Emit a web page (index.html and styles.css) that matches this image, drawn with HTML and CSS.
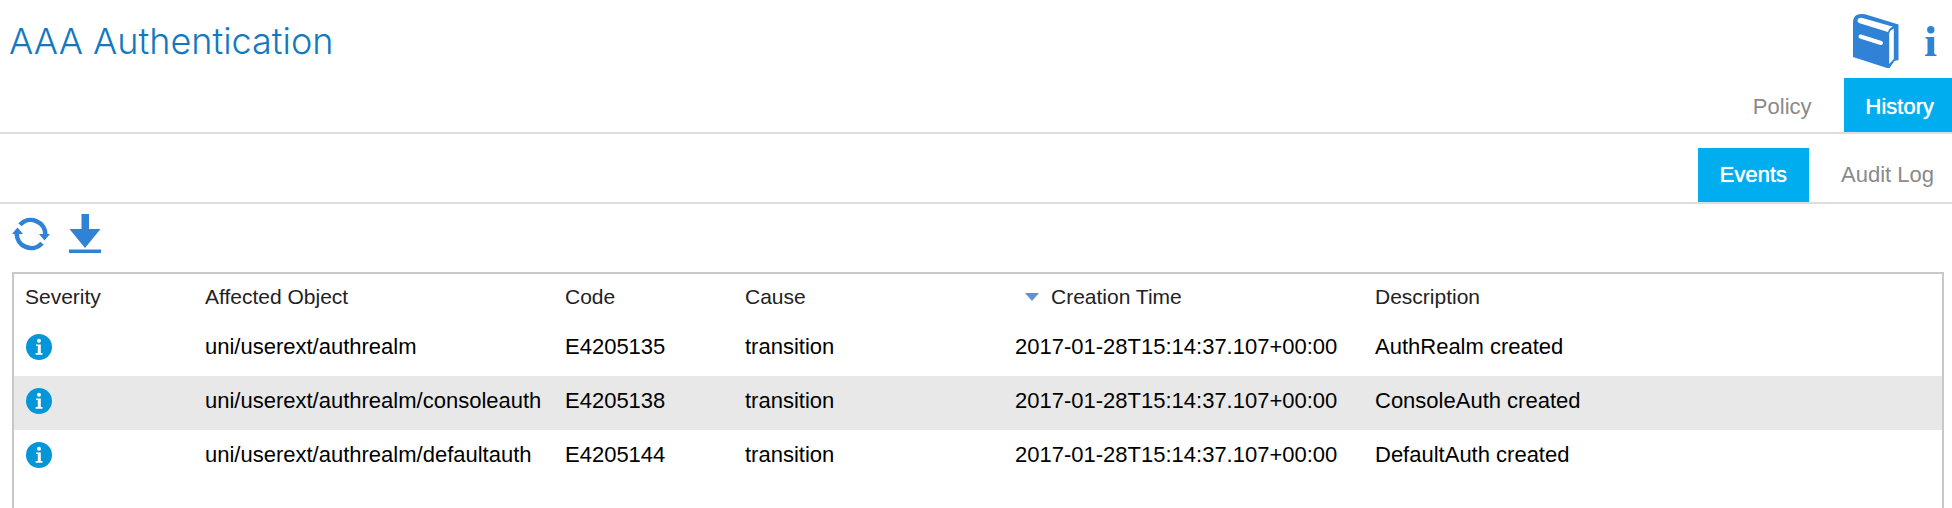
FILE: index.html
```html
<!DOCTYPE html>
<html lang="en">
<head>
<meta charset="utf-8">
<title>AAA Authentication</title>
<link rel="stylesheet" href="styles.css">
</head>
<body>
<svg class="defs" aria-hidden="true">
  <symbol id="severity-info" viewBox="0 0 26 26">
    <circle cx="13" cy="13" r="13" fill="#0496d9"/>
    <circle cx="13" cy="6.8" r="2" fill="#fff"/>
    <path d="M10 10.400h4.800v8.600h1.700v1.700H9.600V19h2.200v-6.900H10z" fill="#fff"/>
  </symbol>
</svg>
<header class="header">
  <h1 class="title">AAA Authentication</h1>
  <div class="header-actions">
    <button class="icon-button" type="button" aria-label="Documentation">
      <svg width="46" height="54" viewBox="0 0 46 54">
        <path d="M0 7Q1 0 8 0L12 .3 45.500 10.500V46l-4 1-5 7H34L0 43z" fill="#2f82d6"/>
        <path d="M4.500 6.500Q5 3 9.500 4L40 12.800Q36 14 35 18L7.500 9.500Q4.300 8.500 4.500 6.500z" fill="#fff"/>
        <path d="M36.200 19.500q1-3.500 4.600-5v30.500l-4.600 5z" fill="#fff"/>
        <path d="M7.500 22.500l20.500 6.500" stroke="#fff" stroke-width="4" stroke-linecap="round"/>
      </svg>
    </button>
    <button class="icon-button" type="button" aria-label="Information">
      <svg width="12" height="30" viewBox="0 0 12 30">
        <circle cx="5.800" cy="3.700" r="3.700" fill="#2f82d6"/>
        <path d="M.5 11h8.700v16q0 1.500 2.300 1.800V30H0v-1.200q2.500-.3 2.500-1.800V13.500q0-1-2-1.200z" fill="#2f82d6"/>
      </svg>
    </button>
  </div>
</header>
<nav class="tabs main-tabs" aria-label="Sections">
  <a class="tab" href="#policy">Policy</a>
  <a class="tab tab-active" href="#history">History</a>
</nav>
<nav class="tabs subtabs" aria-label="History views">
  <a class="tab tab-active" href="#events">Events</a>
  <a class="tab" href="#audit-log">Audit Log</a>
</nav>
<div class="toolbar">
  <button class="icon-button" type="button" aria-label="Refresh">
    <svg width="38" height="34" viewBox="0 0 38 34">
      <g fill="none" stroke="#2f82d6" stroke-width="4.600">
        <path d="M8 7.800A14.500 14.500 0 0 1 33.300 18"/>
        <path d="M30 26.200A14.500 14.500 0 0 1 4.700 16"/>
      </g>
      <path d="M27 17h11l-5.500 6.500zM0 17h11L5.500 10.500z" fill="#2f82d6"/>
    </svg>
  </button>
  <button class="icon-button" type="button" aria-label="Download">
    <svg width="32" height="40" viewBox="0 0 32 40">
      <path d="M12.500 0h7.500v15h11.500L16 34 .5 15h12zM0 35.500h32V39H0z" fill="#2f82d6"/>
    </svg>
  </button>
</div>
<main class="panel">
  <table class="events">
    <colgroup>
      <col class="col-narrow"><col class="col-wide"><col class="col-narrow"><col class="col-medium"><col class="col-wide"><col>
    </colgroup>
    <thead>
      <tr>
        <th scope="col">Severity</th>
        <th scope="col">Affected Object</th>
        <th scope="col">Code</th>
        <th scope="col">Cause</th>
        <th scope="col" aria-sort="descending"><span class="sorted"><svg width="14" height="8" viewBox="0 0 14 8"><path d="M0 0h14L7 8z" fill="#5b94d6"/></svg>Creation Time</span></th>
        <th scope="col">Description</th>
      </tr>
    </thead>
    <tbody>
      <tr>
        <td><svg class="severity" role="img" aria-label="Info"><use href="#severity-info"/></svg></td>
        <td>uni/userext/authrealm</td>
        <td>E4205135</td>
        <td>transition</td>
        <td>2017-01-28T15:14:37.107+00:00</td>
        <td>AuthRealm created</td>
      </tr>
      <tr>
        <td><svg class="severity" role="img" aria-label="Info"><use href="#severity-info"/></svg></td>
        <td>uni/userext/authrealm/consoleauth</td>
        <td>E4205138</td>
        <td>transition</td>
        <td>2017-01-28T15:14:37.107+00:00</td>
        <td>ConsoleAuth created</td>
      </tr>
      <tr>
        <td><svg class="severity" role="img" aria-label="Info"><use href="#severity-info"/></svg></td>
        <td>uni/userext/authrealm/defaultauth</td>
        <td>E4205144</td>
        <td>transition</td>
        <td>2017-01-28T15:14:37.107+00:00</td>
        <td>DefaultAuth created</td>
      </tr>
    </tbody>
  </table>
</main>
</body>
</html>
```
FILE: styles.css
```css
* {
  box-sizing: border-box;
}

body {
  display: flex;
  flex-direction: column;
  min-height: 100vh;
  margin: 0;
  background: #fff;
  color: #000;
  font-family: "Liberation Sans", Arial, sans-serif;
  font-size: 22px;
}

svg {
  display: block;
}

.defs {
  position: absolute;
  width: 0;
  height: 0;
}

.header {
  display: flex;
  justify-content: space-between;
  align-items: flex-start;
  height: 78px;
  padding: 14px 15px 0 9px;
}

.title {
  margin: 0;
  color: #1279c0;
  font-family: Inter, "Liberation Sans", sans-serif;
  font-size: 36px;
  font-weight: 300;
  line-height: 54px;
}

.header-actions {
  display: flex;
  align-items: center;
  gap: 26px;
}

.icon-button {
  padding: 0;
  border: 0;
  background: none;
  cursor: pointer;
}

.tabs {
  display: flex;
  justify-content: flex-end;
  gap: 10px;
  border-bottom: 2px solid #ddd;
}

.subtabs {
  padding-top: 14px;
}

.tab {
  padding: 0 22px;
  color: #8a8a8a;
  line-height: 54px;
  text-decoration: none;
}

.tab:last-child {
  padding-right: 18px;
}

.main-tabs .tab {
  padding-top: 4px;
  line-height: 50px;
}

.tab-active {
  background: #00adef;
  color: #fff;
  text-shadow: 0 0 1px #fff;
}

.toolbar {
  display: flex;
  align-items: center;
  gap: 19px;
  height: 68px;
  padding: 0 12px 8px;
}

.panel {
  flex: 1;
  margin: 0 8px 0 12px;
  border: 2px solid #c8c8c8;
  border-bottom: 0;
}

.events {
  width: 100%;
  border-collapse: collapse;
  table-layout: fixed;
}

.col-narrow {
  width: 180px;
}

.col-medium {
  width: 270px;
}

.col-wide {
  width: 360px;
}

.events th,
.events td {
  padding: 0 0 0 11px;
  text-align: left;
  white-space: nowrap;
}

.events th {
  height: 48px;
  padding-bottom: 2px;
  color: #222;
  font-size: 21px;
  font-weight: 400;
}

.events td {
  height: 54px;
  padding-bottom: 4px;
}

.events tbody tr:nth-child(even) {
  background: #e8e8e8;
}

.sorted {
  display: flex;
  align-items: center;
  gap: 12px;
  padding-left: 10px;
}

.severity {
  width: 26px;
  height: 26px;
  margin-left: 1px;
}
```
